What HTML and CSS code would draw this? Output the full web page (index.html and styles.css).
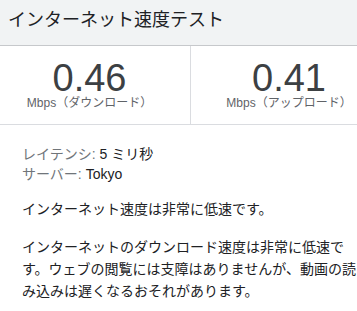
FILE: index.html
```html
<!DOCTYPE html>
<html lang="ja">
<head>
    <meta charset="UTF-8">
    <meta name="viewport" content="width=device-width, initial-scale=1.0">
    <title>インターネット速度テスト</title>
    <link rel="stylesheet" href="styles.css">
</head>
<body>

    <div class="header">
        <h2 class="title">インターネット速度テスト</h2>
    </div>

    <div class="metrics">
        <div class="metric metric-down">
            <div class="metric-value">0.46</div>
            <div class="metric-label">Mbps（ダウンロード）</div>
        </div>
        <div class="metric metric-up">
            <div class="metric-value">0.41</div>
            <div class="metric-label">Mbps（アップロード）</div>
        </div>
    </div>

    <div class="result">
        <div class="details">
            <div><span class="details-key">レイテンシ:</span> 5 ミリ秒</div>
            <div><span class="details-key">サーバー:</span> Tokyo</div>
        </div>

        <p class="summary">インターネット速度は非常に低速です。</p>

        <p class="summary">インターネットのダウンロード速度は非常に低速です。ウェブの閲覧には支障はありませんが、動画の読み込みは遅くなるおそれがあります。</p>
    </div>

</body>
</html>
```

FILE: styles.css
```css
body {
    font-family: "Liberation Sans", "Noto Sans CJK JP", sans-serif;
    margin: 0;
    color: #202124;
    background: #fff;
    overflow: hidden;
}

.header {
    background-color: #f1f3f4;
    border-bottom: 1px solid #c6c8cb;
    height: 46px;
    padding: 8px 8px 0;
    box-sizing: border-box;
}

.title {
    margin: 0;
    font-size: 18px;
    font-weight: normal;
    line-height: 24px;
    color: #202124;
}

.metrics {
    display: flex;
    border-bottom: 1px solid #dadce0;
}

.metric {
    text-align: center;
    padding: 14px 0 14px;
}

.metric-down {
    flex: 0 0 191px;
    box-sizing: border-box;
    padding-right: 11px;
    border-right: 1px solid #dadce0;
}

.metric-up {
    flex: 1;
    padding-left: 30px;
}

.metric-value {
    font-size: 38px;
    line-height: 36px;
    color: #3c4043;
}

.metric-label {
    font-size: 12px;
    line-height: 14px;
    color: #5f6368;
}

.result {
    padding: 19px 0 0 22px;
    font-size: 14px;
}

.details {
    line-height: 20px;
}

.details-key {
    color: #70757a;
}

/* the text runs right up to the window edge */
.summary {
    margin: 14px -4px 0 0;
    line-height: 22px;
}

.summary + .summary {
    margin-top: 16px;
}
```
